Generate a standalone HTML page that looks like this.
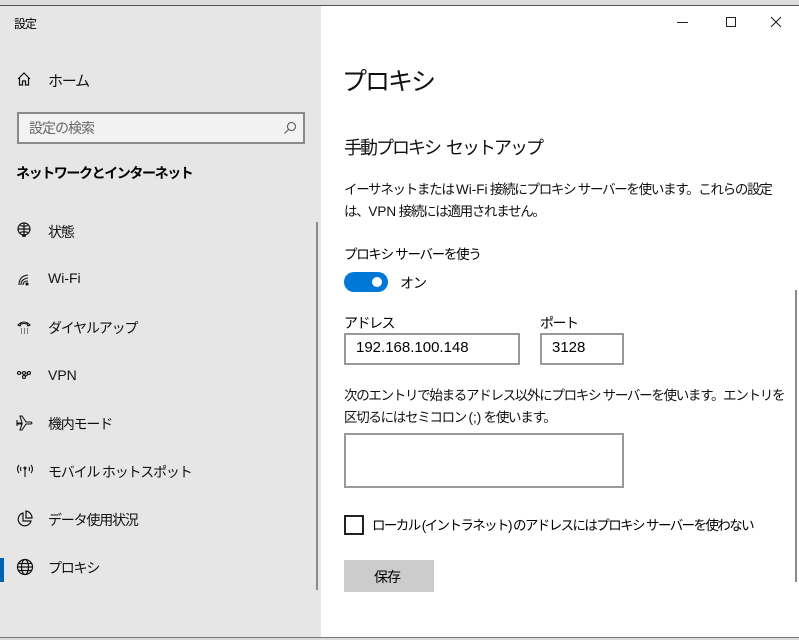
<!DOCTYPE html>
<html><head><meta charset="utf-8"><style>
*{margin:0;padding:0;box-sizing:border-box}
body{width:799px;height:640px;overflow:hidden;background:#dcdcdc;font-family:"Liberation Sans","Noto Sans CJK JP",sans-serif;color:#000;position:relative}
.win{position:absolute;left:-1px;top:5px;width:801px;height:633px;border-top:1px solid #555;border-left:1px solid #777;border-bottom:1px solid #777;background:#fff;overflow:hidden}
.side{position:absolute;left:0;top:0;width:321px;height:100%;background:#e6e6e6}
.t{position:absolute;white-space:nowrap;letter-spacing:-1px}
.nav{position:absolute;left:48px;font-size:14px;color:#111;letter-spacing:-1.2px}
.ic{position:absolute;left:16px}
.box{position:absolute;border:2px solid #999;background:#fff}
.l{letter-spacing:0}
</style></head><body>
<div class="win">
<div class="side">
  <div class="t" style="left:14px;top:9px;font-size:12px">設定</div>
  <svg class="ic" style="top:65px" width="16" height="16" viewBox="0 0 16 16" fill="none" stroke="#111" stroke-width="1.2"><path d="M2 8 L8 2 L14 8 M3.5 6.5 V14 H6.5 V10 H9.5 V14 H12.5 V6.5"/></svg>
  <div class="nav" style="top:64px;font-size:15px">ホーム</div>
  <div class="box" style="left:17px;top:106px;width:288px;height:32px;background:#f2f2f2;border-color:#8a8a8a"></div>
  <div class="t" style="left:29px;top:112px;font-size:14px;color:#666">設定の検索</div>
  <svg style="position:absolute;left:283px;top:115px" width="14" height="14" viewBox="0 0 14 14" fill="none" stroke="#555" stroke-width="1.1"><circle cx="8.5" cy="5.5" r="4"/><path d="M5.5 8.5 L1.5 12.5"/></svg>
  <div class="t" style="left:16px;top:157px;font-size:14px;font-weight:bold;letter-spacing:-1.4px">ネットワークとインターネット</div>
  <svg class="ic" style="top:216px" width="18" height="18" viewBox="0 0 18 18" fill="none" stroke="#111" stroke-width="1.2"><circle cx="8" cy="7" r="6"/><path d="M2 7H14 M8 1V13 M4 3.5Q8 5 12 3.5 M4 10.5Q8 9 12 10.5 M6 14H10 M8 13V15"/></svg>
  <div class="nav" style="top:216px">状態</div>
  <svg class="ic" style="top:264px" width="18" height="18" viewBox="0 0 18 18" fill="none" stroke="#111" stroke-width="1.1"><path d="M3 15Q3 6 12 5 M5 15Q5 9 12 8 M7 15Q7 11 12 11"/><circle cx="11" cy="14" r="1" fill="#111"/></svg>
  <div class="nav" style="top:264px;letter-spacing:0">Wi-Fi</div>
  <svg class="ic" style="top:313px" width="18" height="18" viewBox="0 0 18 18" fill="none" stroke="#111" stroke-width="1.1"><path d="M2 6Q8 0 14 6 L12 7 L11 5 Q8 4 5 5 L4 7Z"/><path d="M5 10h1M8 10h1M11 10h1M5 12h1M8 12h1M11 12h1M5 14h1M8 14h1M11 14h1"/></svg>
  <div class="nav" style="top:312px">ダイヤルアップ</div>
  <svg class="ic" style="top:360px" width="18" height="18" viewBox="0 0 18 18" fill="none" stroke="#111" stroke-width="1.1"><circle cx="3" cy="7" r="1.5"/><circle cx="8" cy="7" r="1.5"/><circle cx="13" cy="7" r="1.5"/><circle cx="8" cy="11" r="1.5"/><path d="M4.5 7H6.5 M9.5 7H11.5 M12 8.5L9 10.5"/></svg>
  <div class="nav" style="top:361px;letter-spacing:0">VPN</div>
  <svg class="ic" style="top:408px" width="18" height="18" viewBox="0 0 18 18" fill="none" stroke="#111" stroke-width="1.1"><path d="M1 9H6 L4 2H6L10 8H15Q17 9 15 10H10L6 16H4L6 10H1Z M1 6V12"/></svg>
  <div class="nav" style="top:408px">機内モード</div>
  <svg class="ic" style="top:456px" width="18" height="18" viewBox="0 0 18 18" fill="none" stroke="#111" stroke-width="1.1"><path d="M3 3Q0 7 3 11 M15 3Q18 7 15 11 M5 5Q4 7 5 9 M13 5Q14 7 13 9 M9 6V15"/><circle cx="9" cy="6" r="1"/></svg>
  <div class="nav" style="top:456px">モバイル ホットスポット</div>
  <svg class="ic" style="top:504px" width="18" height="18" viewBox="0 0 18 18" fill="none" stroke="#111" stroke-width="1.2"><path d="M7 3A6.5 6.5 0 1 0 15 11H7Z M10 1V8H16A7 7 0 0 0 10 1Z"/></svg>
  <div class="nav" style="top:504px">データ使用状況</div>
  <div style="position:absolute;left:0;top:552px;width:4px;height:24px;background:#0063b1"></div>
  <svg class="ic" style="top:552px" width="18" height="18" viewBox="0 0 18 18" fill="none" stroke="#111" stroke-width="1.2"><circle cx="9" cy="9" r="7.5"/><ellipse cx="9" cy="9" rx="3.5" ry="7.5"/><path d="M1.5 9H16.5 M2.5 5.5H15.5 M2.5 12.5H15.5"/></svg>
  <div class="nav" style="top:552px">プロキシ</div>
  <div style="position:absolute;left:316px;top:216px;width:2px;height:368px;background:#8a8a8a"></div>
</div>
<div style="position:absolute;left:677px;top:16px;width:11px;height:1px;background:#222"></div>
<div style="position:absolute;left:726px;top:11px;width:10px;height:10px;border:1px solid #222"></div>
<svg style="position:absolute;left:770px;top:10px" width="12" height="12" viewBox="0 0 12 12" stroke="#222" stroke-width="1.1"><path d="M1 1L11 11M11 1L1 11"/></svg>
<div class="t" style="left:342px;top:56px;font-size:25px;color:#111;letter-spacing:-2px">プロキシ</div>
<div class="t" style="left:344px;top:128px;font-size:18px;color:#111;letter-spacing:-2px">手動プロキシ&nbsp; セットアップ</div>
<div class="t" style="left:344px;top:173px;font-size:13.5px;line-height:22px;color:#111;letter-spacing:-1.3px">イーサネットまたは <span class="l">Wi-Fi</span> 接続にプロキシ サーバーを使います。これらの設定<br>は、<span class="l">VPN</span> 接続には適用されません。</div>
<div class="t" style="left:344px;top:237px;font-size:13.5px;letter-spacing:-1.3px">プロキシ&nbsp;サーバーを使う</div>
<div style="position:absolute;left:344px;top:266px;width:44px;height:20px;border-radius:10px;background:#0078d7"></div>
<div style="position:absolute;left:372px;top:271px;width:10px;height:10px;border-radius:5px;background:#fff"></div>
<div class="t" style="left:400px;top:267px;font-size:14px">オン</div>
<div class="t" style="left:344px;top:307px;font-size:14px;letter-spacing:-1.5px">アドレス</div>
<div class="t" style="left:540px;top:307px;font-size:14px;letter-spacing:-1.5px">ポート</div>
<div class="box" style="left:344px;top:327px;width:176px;height:32px"></div>
<div class="t" style="left:356px;top:333px;font-size:15px;letter-spacing:0">192.168.100.148</div>
<div class="box" style="left:540px;top:327px;width:84px;height:32px"></div>
<div class="t" style="left:552px;top:333px;font-size:15px;letter-spacing:0">3128</div>
<div class="t" style="left:344px;top:379px;font-size:13.5px;line-height:22px;color:#111;letter-spacing:-1.3px">次のエントリで始まるアドレス以外にプロキシ サーバーを使います。エントリを<br>区切るにはセミコロン <span class="l">(;)</span> を使います。</div>
<div class="box" style="left:344px;top:427px;width:280px;height:55px"></div>
<div style="position:absolute;left:344px;top:509px;width:20px;height:20px;border:2px solid #222"></div>
<div class="t" style="left:372px;top:508px;font-size:13.5px;letter-spacing:-1.6px">ローカル (イントラネット) のアドレスにはプロキシ サーバーを使わない</div>
<div style="position:absolute;left:344px;top:554px;width:90px;height:32px;background:#cccccc"></div>
<div class="t" style="left:374px;top:561px;font-size:14px">保存</div>
<div style="position:absolute;left:795px;top:284px;width:2px;height:292px;background:#8a8a8a"></div>
</div>
</body></html>
